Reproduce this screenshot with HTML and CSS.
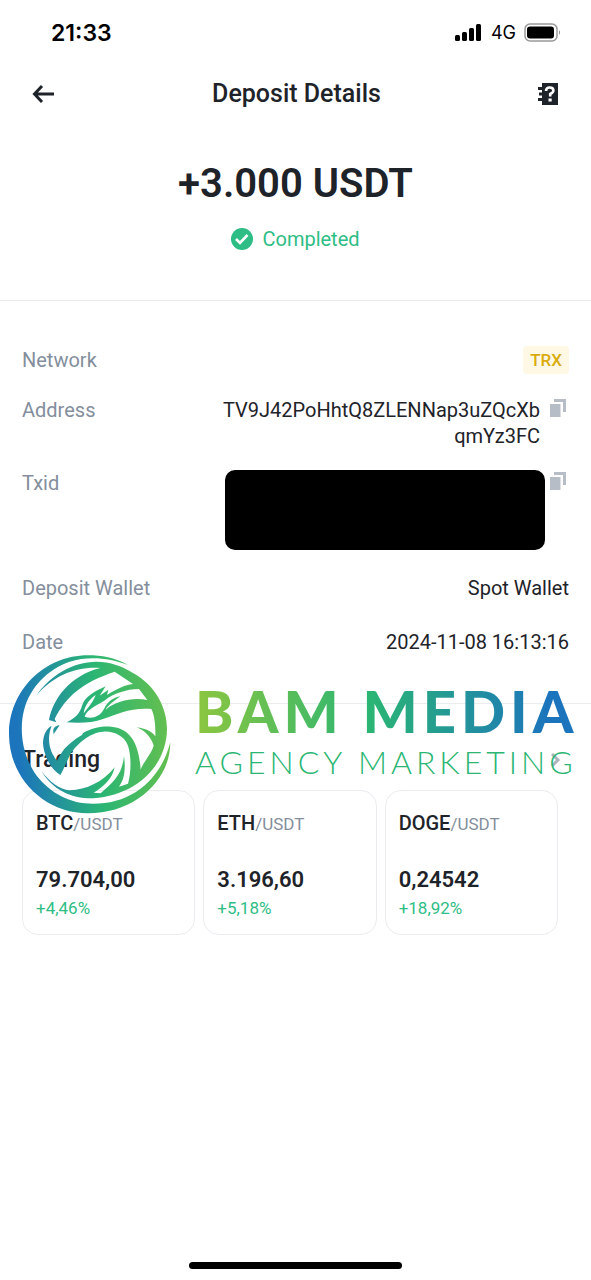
FILE: index.html
```html
<!DOCTYPE html>
<html lang="en">
<head>
<meta charset="utf-8">
<meta name="viewport" content="width=device-width, initial-scale=1">
<title>Deposit Details</title>
<link rel="stylesheet" href="styles.css">
</head>
<body>
<div class="status">
  <span class="time">21:33</span>
  <div class="indicators">
    <svg width="28" height="18" viewBox="0 0 28 18" aria-hidden="true"><rect x="0" y="11" width="5" height="6" rx="1.5"/><rect x="7" y="8" width="5" height="9" rx="1.5"/><rect x="14" y="4" width="5" height="13" rx="1.5"/><rect x="21" y="0" width="5" height="17" rx="1.5"/></svg>
    <span class="carrier">4G</span>
    <svg width="38" height="20" viewBox="0 0 38 20" aria-hidden="true"><rect x="1" y="1" width="32" height="17" rx="5" fill="#fff" stroke="#999" stroke-width="1.5"/><rect x="3" y="3.500" width="27" height="12" rx="3"/><path d="M35 7q2 2.500 0 5z" fill="#888"/></svg>
  </div>
</div>
<header class="bar">
  <button class="icon" aria-label="Back"><svg width="24" height="20" viewBox="0 0 24 20" fill="none" stroke="#1e2329" stroke-width="3"><path d="M22 10H3M10 2L2.500 10l7.500 8"/></svg></button>
  <h1 class="title">Deposit Details</h1>
  <button class="icon" aria-label="Help"><svg width="22" height="24" viewBox="0 0 22 24"><path fill="#1e2329" d="M5 1h16v22H5v-4H1v-3h4v-2.500H2v-3h3V8H1V5h4z"/><path d="M9 9q0-3.500 3.700-3.500t3.700 3q0 2-3.200 3.500v2.500" fill="none" stroke="#fff" stroke-width="2.600"/><path fill="#fff" d="M11.500 16.500h3.200v3h-3.200z"/></svg></button>
</header>
<section class="summary">
  <p class="amount">+3.000 USDT</p>
  <p class="state"><svg width="22" height="22" viewBox="0 0 22 22" aria-hidden="true"><circle cx="11" cy="11" r="11" fill="#2ebd85"/><path d="M5 11l4 4 7.500-8" fill="none" stroke="#fff" stroke-width="2.600"/></svg>Completed</p>
</section>
<dl class="details">
  <div class="row network"><dt>Network</dt><dd><span class="tag">TRX</span></dd></div>
  <div class="row address"><dt>Address</dt><dd>TV9J42PoHhtQ8ZLENNap3uZQcXb<br>qmYz3FC</dd><dd><button class="copy" aria-label="Copy address"><svg width="16" height="18" viewBox="0 0 16 18" fill="#b7bdc6"><path d="M0 5h10.500v13H0zM4 0h12v13h-3V3H4z"/></svg></button></dd></div>
  <div class="row txid"><dt>Txid</dt><dd class="redacted"></dd><dd><button class="copy" aria-label="Copy Txid"><svg width="16" height="18" viewBox="0 0 16 18" fill="#b7bdc6"><path d="M0 5h10.500v13H0zM4 0h12v13h-3V3H4z"/></svg></button></dd></div>
  <div class="row wallet"><dt>Deposit Wallet</dt><dd>Spot Wallet</dd></div>
  <div class="row date"><dt>Date</dt><dd>2024-11-08 16:13:16</dd></div>
</dl>
<section class="trading">
  <a class="heading" href="#"><h2>Trading</h2><svg width="10" height="14" viewBox="0 0 10 14" fill="none" stroke="#aeb4bc" stroke-width="3" aria-hidden="true"><path d="M1 1l6 6-6 6"/></svg></a>
  <div class="cards">
    <a class="card" href="#"><span class="pair"><b>BTC</b>/USDT</span><strong class="price">79.704,00</strong><span class="change">+4,46%</span></a>
    <a class="card" href="#"><span class="pair"><b>ETH</b>/USDT</span><strong class="price">3.196,60</strong><span class="change">+5,18%</span></a>
    <a class="card" href="#"><span class="pair"><b>DOGE</b>/USDT</span><strong class="price">0,24542</strong><span class="change">+18,92%</span></a>
  </div>
  <div class="watermark">
    <svg class="emblem" viewBox="28 28 486 477" role="img" aria-label="Eagle emblem">
      <defs><linearGradient id="leaf" gradientUnits="userSpaceOnUse" x1="28" y1="266" x2="512" y2="230"><stop offset="0.050" stop-color="#1c75bc"/><stop offset="0.550" stop-color="#2bb673"/><stop offset="1" stop-color="#66bf4e"/></linearGradient></defs>
      <g fill="url(#leaf)" fill-rule="evenodd">
        <path d="M385 58C345 35 305 29 265 29C134 29 28 135 28 266S134 503 265 503C405 503 512 405 512 290C495 355 460 405 410 438C365 467 310 478 255 473C190 466 130 425 98 370C65 312 60 245 73 194C90 125 145 70 210 48C265 30 330 36 385 58Z"/>
        <path d="M110 150C150 90 220 48 290 48C330 48 370 62 400 82C470 120 502 190 502 250C500 375 390 458 265 458C200 455 150 420 125 375C150 410 180 430 210 434C260 432 310 410 345 365C338 400 310 425 282 441L303 443C345 405 368 385 373 330C378 370 375 400 358 423L385 414C395 380 395 330 385 300C375 270 340 255 310 258C270 260 225 300 210 330C200 350 190 375 182 388C150 370 130 320 130 290C132 265 140 250 156 240C140 280 150 320 172 345C185 320 200 295 247 268L250 262C280 245 310 241 335 243C390 248 418 290 423 372C430 350 455 325 462 300C455 275 435 255 412 245C435 248 458 258 467 272C468 240 465 210 455 190C400 184 350 205 310 220C280 232 240 232 200 230C225 218 240 205 247 180C258 150 285 138 318 122L300 150L326 132L322 148C350 130 375 118 400 115L345 78C250 110 200 150 165 220L170 230L148 223C160 160 210 90 302 67C230 62 160 90 110 150ZM418 130L443 163C400 155 350 165 318 192C325 178 345 165 362 152C345 155 325 165 313 190C300 215 275 220 255 213C260 190 300 175 318 162C340 145 380 130 418 130ZM288 148C270 160 255 180 252 203C265 186 280 170 288 148Z"/>
        <path d="M180 239L162 265C158 250 163 241 180 239Z"/>
      </g>
    </svg>
    <div class="brand"><span class="brand-name">BAM MEDIA</span><span class="brand-line">AGENCY MARKETING</span></div>
  </div>
</section>
<div class="home"></div>
</body>
</html>
```
FILE: styles.css
```css
* { box-sizing: border-box; }
body {
  margin: 0;
  min-height: 100vh;
  display: flex;
  flex-direction: column;
  background: #fff;
  color: #1e2329;
  font: 400 20px/26px Roboto, sans-serif;
}
h1, h2, p, dl, dd { margin: 0; }
button { border: 0; padding: 0; background: none; cursor: pointer; }
a { color: inherit; text-decoration: none; }
svg { display: block; }

.status {
  height: 66px;
  padding: 0 29px 0 51px;
  display: flex;
  align-items: center;
  justify-content: space-between;
  color: #000;
}
.time { font: 600 23px/26px Inter, sans-serif; }
.indicators { display: flex; align-items: center; gap: 8px; }
.carrier { font: 400 18px/24px Inter, sans-serif; }

.bar {
  height: 56px;
  padding: 0 32px;
  display: flex;
  align-items: center;
  justify-content: space-between;
}
.title { font: 500 25px/32px Roboto, sans-serif; }

.summary {
  height: 179px;
  padding-top: 36px;
  border-bottom: 1px solid #eaecef;
  display: flex;
  flex-direction: column;
  align-items: center;
  gap: 16px;
}
.amount { font-size: 40px; line-height: 52px; font-weight: 600; }
.state { display: flex; align-items: center; gap: 9px; color: #2ebd85; }

.details {
  padding: 45px 22px 46px;
  border-bottom: 1px solid #eaecef;
}
.row { display: flex; align-items: flex-start; min-height: 28px; }
.row dt { flex: 1; color: #848e9c; }
.row dd { text-align: right; }
.network { align-items: center; }
.tag {
  display: block;
  padding: 0 7px;
  border-radius: 4px;
  background: #fef8e5;
  color: #d9ac0c;
  font-size: 17px;
  line-height: 28px;
  font-weight: 500;
}
.address { margin-top: 23px; }
.copy { display: block; margin: 2px 3px 0 10px; }
.txid { margin-top: 21px; }
.redacted { width: 320px; height: 80px; border-radius: 10px; background: #000; }
.txid .copy { margin-left: 5px; }
.wallet { margin-top: 25px; }
.date { margin-top: 26px; }

.trading { position: relative; padding: 42px 33px 0 22px; }
.heading { display: flex; align-items: center; justify-content: space-between; }
.heading h2 { font-size: 23px; line-height: 28px; font-weight: 500; }
.heading svg { margin-right: -3px; }
.cards {
  margin-top: 16px;
  display: grid;
  grid-template-columns: repeat(3, 1fr);
  gap: 8px;
}
.card {
  padding: 19px 13px 13px;
  border: 1px solid #eaecef;
  border-radius: 16px;
  display: flex;
  flex-direction: column;
}
.pair { font-size: 17px; color: #848e9c; }
.pair b { font-size: 20px; font-weight: 500; color: #1e2329; }
.price { margin-top: 28px; font-size: 22px; line-height: 30px; font-weight: 600; }
.change { font-size: 17px; color: #2ebd85; }

.watermark {
  position: absolute;
  top: -49px;
  left: 9px;
  right: 15px;
  display: flex;
  gap: 24px;
  pointer-events: none;
}
.emblem { width: 162px; height: 159px; flex: none; }
.brand { padding-top: 22px; flex: 1; display: flex; flex-direction: column; white-space: nowrap; }
.brand-name {
  font: 900 58px/68px Lato, sans-serif;
  letter-spacing: 5px;
  color: transparent;
  background: linear-gradient(90deg, #8dc63f, #2bb673 45%, #1c75bc 92%);
  background-clip: text;
}
.brand-line { font: 300 32px/34px Lato, sans-serif; letter-spacing: 4px; color: #2bb673; }

.home { width: 36%; height: 7px; margin: auto auto 11px; border-radius: 4px; background: #000; }
```
